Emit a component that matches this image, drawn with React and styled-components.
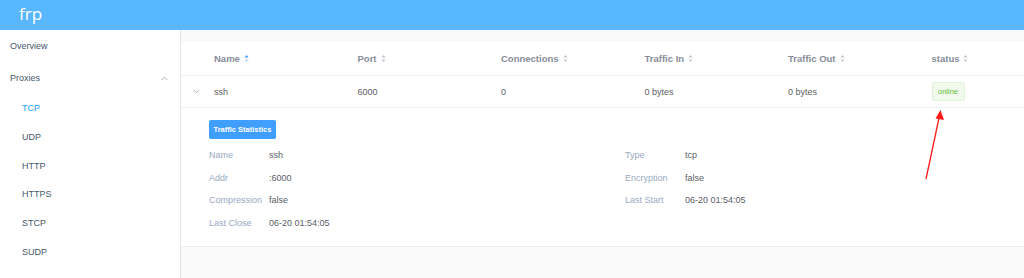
import React from "react";
import styled, { createGlobalStyle } from "styled-components";

const Global = createGlobalStyle`
  html, body { margin: 0; padding: 0; }
  body {
    width: 1024px; height: 278px; overflow: hidden;
    font-family: "Liberation Sans", Arial, sans-serif;
    background: #fff;
  }
`;

const Page = styled.div`
  position: relative;
  width: 1024px;
  height: 278px;
  display: flex;
  flex-direction: column;
  overflow: hidden;
`;

const Header = styled.header`
  height: 30px;
  flex: none;
  background: #58b7ff;
  display: flex;
  align-items: center;
  padding-left: 19px;
  color: #fff;
  font-family: "Open Sans", "Liberation Sans", sans-serif;
  font-size: 17px;
  line-height: 1;
  padding-bottom: 3px;
  box-sizing: border-box;
`;

const Body = styled.div`
  flex: 1;
  display: flex;
  min-height: 0;
`;

const Sidebar = styled.nav`
  width: 180px;
  flex: none;
  border-right: 1px solid #e6e6e6;
  background: #fff;
`;

const MenuItem = styled.div`
  height: 32px;
  display: flex;
  align-items: center;
  justify-content: space-between;
  padding: 0 12px 0 10px;
  font-size: 9px;
  color: #48576a;
`;

const SubItem = styled.div`
  height: 28.7px;
  display: flex;
  align-items: center;
  padding-left: 22px;
  font-size: 9px;
  color: ${(p) => (p.$active ? "#20a0ff" : "#48576a")};
`;

const Main = styled.main`
  flex: 1;
  background: #f9f9f9;
  padding-top: 12px;
  overflow: hidden;
`;

const Card = styled.section`
  background: #fff;
  overflow: hidden;
`;

const Grid = styled.div`
  display: grid;
  grid-template-columns: 23px repeat(6, 143.5px);
  width: 884px;
  border-bottom: 1px solid #ebeef5;
  height: ${(p) => p.$h}px;
  box-sizing: border-box;
  align-items: center;
`;

const HeadCell = styled.div`
  padding-left: 10px;
  font-size: 9.5px;
  font-weight: 700;
  color: #878d99;
  display: flex;
  align-items: center;
  gap: 4px;
`;

const Cell = styled.div`
  padding-left: 10px;
  font-size: 9px;
  color: #5a5e66;
  display: flex;
  align-items: center;
`;

const ExpandCell = styled.div`
  display: flex;
  justify-content: flex-end;
  padding-right: 4px;
  color: #9aa0a8;
`;

const Tag = styled.span`
  display: inline-flex;
  align-items: center;
  justify-content: center;
  height: 19px;
  width: 33px;
  font-size: 7.5px;
  color: #67c23a;
  background: #f0f9eb;
  border: 1px solid #e1f3d8;
  border-radius: 2px;
  box-sizing: border-box;
`;

const Expanded = styled.div`
  padding: 12px 28px 0;
  height: 139px;
  box-sizing: border-box;
  border-bottom: 1px solid #ebeef5;
`;

const Button = styled.button`
  display: block;
  height: 19px;
  width: 67px;
  padding: 0;
  border: none;
  border-radius: 2px;
  background: #409eff;
  color: #fff;
  font-family: inherit;
  font-size: 7.5px;
  font-weight: 700;
`;

const Details = styled.div`
  margin-top: 5px;
  display: grid;
  grid-template-columns: 416px 300px;
  grid-auto-rows: 22.5px;
  align-items: center;
`;

const Field = styled.div`
  display: flex;
  font-size: 9px;
  grid-column: ${(p) => p.$col};
  grid-row: ${(p) => p.$row};
`;

const Label = styled.span`
  width: 60px;
  color: #99a9bf;
`;

const Value = styled.span`
  color: #5a5e66;
`;

const Arrow = styled.svg`
  position: absolute;
  left: 918px;
  top: 106px;
`;

const Sort = ({ active }) => (
  <svg width="5" height="9" viewBox="0 0 5 9">
    <path d="M2.5 1 L4.5 3.6 L0.5 3.6 Z" fill={active ? "#409eff" : "#c0c4cc"} />
    <path d="M2.5 8 L4.5 5.4 L0.5 5.4 Z" fill={active ? "#b3d8ff" : "#c0c4cc"} />
  </svg>
);

const Chevron = ({ up }) => (
  <svg width="7" height="5" viewBox="0 0 7 5">
    <path
      d={up ? "M0.8 4 L3.5 1.2 L6.2 4" : "M0.8 1 L3.5 3.8 L6.2 1"}
      fill="none"
      stroke="#9aa0a8"
      strokeWidth="0.8"
    />
  </svg>
);

const columns = ["Name", "Port", "Connections", "Traffic In", "Traffic Out", "status"];
const subs = ["TCP", "UDP", "HTTP", "HTTPS", "STCP", "SUDP"];

const details = [
  ["Name", "ssh", 1, 1],
  ["Addr", ":6000", 1, 2],
  ["Compression", "false", 1, 3],
  ["Last Close", "06-20 01:54:05", 1, 4],
  ["Type", "tcp", 2, 1],
  ["Encryption", "false", 2, 2],
  ["Last Start", "06-20 01:54:05", 2, 3],
];

export default function App() {
  return (
    <Page>
      <Global />
      <Header>frp</Header>
      <Body>
        <Sidebar>
          <MenuItem>Overview</MenuItem>
          <MenuItem>
            Proxies
            <Chevron up />
          </MenuItem>
          {subs.map((s, i) => (
            <SubItem key={s} $active={i === 0}>
              {s}
            </SubItem>
          ))}
        </Sidebar>
        <Main>
          <Card>
            <Grid $h={34}>
              <div />
              {columns.map((c, i) => (
                <HeadCell key={c}>
                  {c}
                  <Sort active={i === 0} />
                </HeadCell>
              ))}
            </Grid>
            <Grid $h={32}>
              <ExpandCell>
                <Chevron />
              </ExpandCell>
              <Cell>ssh</Cell>
              <Cell>6000</Cell>
              <Cell>0</Cell>
              <Cell>0 bytes</Cell>
              <Cell>0 bytes</Cell>
              <Cell>
                <Tag>online</Tag>
              </Cell>
            </Grid>
            <Expanded>
              <Button>Traffic Statistics</Button>
              <Details>
                {details.map(([l, v, c, r]) => (
                  <Field key={l} $col={c} $row={r}>
                    <Label>{l}</Label>
                    <Value>{v}</Value>
                  </Field>
                ))}
              </Details>
            </Expanded>
          </Card>
        </Main>
      </Body>
      <Arrow width="40" height="80" viewBox="0 0 40 80">
        <line x1="8" y1="73" x2="21" y2="12" stroke="#ff1a1a" strokeWidth="1.3" />
        <path d="M22.5 4 L26 14 L17.5 12.5 Z" fill="#ff1a1a" />
      </Arrow>
    </Page>
  );
}
